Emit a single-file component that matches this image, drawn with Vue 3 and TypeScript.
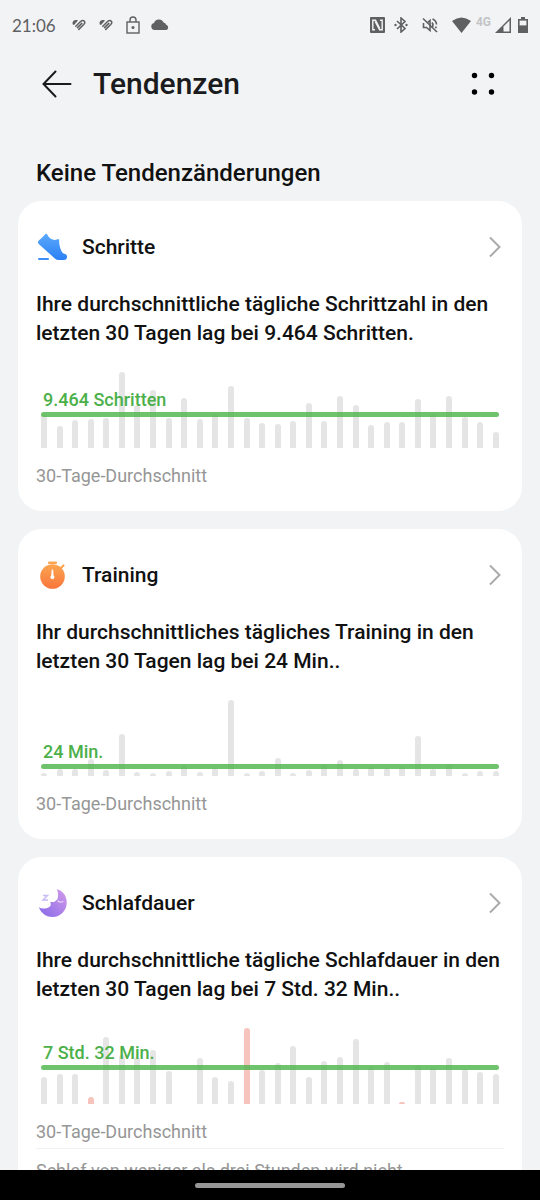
<script setup lang="ts">
interface TrendCard {
  id: 'steps' | 'training' | 'sleep'
  title: string
  lines: string[]
  average: string
  lineOffset: number
  bars: number[]
  alerts: number[]
  note?: string
}

const cards: TrendCard[] = [
  {
    id: 'steps',
    title: 'Schritte',
    lines: ['Ihre durchschnittliche tägliche Schrittzahl in den', 'letzten 30 Tagen lag bei 9.464 Schritten.'],
    average: '9.464 Schritten',
    lineOffset: 31,
    bars: [33, 22, 28, 29, 30, 76, 43, 58, 30, 50, 29, 34, 62, 30, 25, 24, 27, 45, 27, 52, 43, 23, 26, 26, 49, 34, 52, 31, 26, 16],
    alerts: [],
  },
  {
    id: 'training',
    title: 'Training',
    lines: ['Ihr durchschnittliches tägliches Training in den', 'letzten 30 Tagen lag bei 24 Min..'],
    average: '24 Min.',
    lineOffset: 7,
    bars: [3, 7, 7, 17, 6, 42, 4, 3, 5, 10, 4, 8, 76, 3, 5, 18, 3, 6, 12, 16, 7, 9, 8, 9, 40, 7, 12, 3, 5, 5],
    alerts: [],
  },
  {
    id: 'sleep',
    title: 'Schlafdauer',
    lines: ['Ihre durchschnittliche tägliche Schlafdauer in den', 'letzten 30 Tagen lag bei 7 Std. 32 Min..'],
    average: '7 Std. 32 Min.',
    lineOffset: 34,
    bars: [27, 30, 30, 7, 67, 49, 47, 54, 33, 0, 46, 27, 23, 76, 34, 41, 58, 27, 43, 47, 65, 37, 42, 2, 39, 37, 46, 35, 32, 30],
    alerts: [3, 13, 23],
    note: 'Schlaf von weniger als drei Stunden wird nicht',
  },
]
</script>

<template>
  <div class="screen">
    <div class="status">
      <div class="status-left">
        <span class="time">21:06</span>
        <svg v-for="n in 2" :key="n" class="heart" viewBox="0 0 14 12" width="14" height="12">
          <path d="M.8 5.500C-.5 2 3 .2 6 1.500L2 6z" fill="#5f6062" />
          <path d="M3.800 7.200 8.300 2.800Q10.800.600 12.300 2.200 13.500 3.600 11.700 5.500L6.800 10.400M5.500 8.600 9.800 4.400" fill="none" stroke="#5f6062" stroke-width="1.500" stroke-linecap="round" />
        </svg>
        <svg class="lock" viewBox="0 0 14 18" width="14" height="18">
          <rect x="1" y="6" width="12" height="11" fill="none" stroke="#5f6062" stroke-width="1.400" />
          <path d="M4 6V4a3 3 0 0 1 6 0v2" fill="none" stroke="#5f6062" stroke-width="1.400" />
          <circle cx="7" cy="11.500" r="1.500" fill="#5f6062" />
        </svg>
        <svg viewBox="0 0 18 12" width="18" height="12">
          <path d="M3.500 11a3.500 3.500 0 0 1-.5-6.900A5.200 5.200 0 0 1 12.600 3.500a3.500 3.500 0 0 1 2.600 2.300 2.700 2.700 0 0 1 0 5.200z" fill="#5f6062" />
        </svg>
      </div>
      <div class="status-right">
        <svg class="nfc" viewBox="0 0 15 16" width="15" height="16">
          <rect width="15" height="16" rx="1" fill="#5f6062" />
          <path d="M5 12.800H2.800V3.200H5.500L9.800 11.500M10 3.200h2.200v9.600H9.600L5.200 4.500" fill="none" stroke="#f1f3f5" stroke-width="1.400" />
        </svg>
        <svg class="bluetooth" viewBox="0 0 14 16" width="14" height="16">
          <path d="m3 4 8 7.500L7 15V1l4 3.500L3 12" fill="none" stroke="#5f6062" stroke-width="1.600" />
          <circle cx="1.500" cy="8" r="1.200" fill="#5f6062" />
          <circle cx="12.500" cy="8" r="1.200" fill="#5f6062" />
        </svg>
        <svg class="mute" viewBox="0 0 16 16" width="16" height="16">
          <path d="M1.500 6v4.500h3L8 13.500V3.500L5.500 5.500" fill="none" stroke="#5f6062" stroke-width="1.600" />
          <path d="M10 5.500q2 2.500 0 5M10.500 2q3.800 1.500 4 5.500M14.300 9.500l-.8 1.800" fill="none" stroke="#5f6062" stroke-width="1.600" />
          <path d="m1 1.500 14 13.500" stroke="#5f6062" stroke-width="1.600" />
        </svg>
        <svg class="wifi" viewBox="0 0 19 16" width="19" height="16">
          <path d="M0 4Q9.500-3.200 19 4L9.500 16z" fill="#5f6062" />
        </svg>
        <span class="network">4G</span>
        <svg class="signal" viewBox="0 0 16 16" width="16" height="16">
          <path d="M16 0V16H0z" fill="#5f6062" />
          <path d="M8.500 9.500 14.500 3.500V14.500H8.500z" fill="#f1f3f5" />
        </svg>
        <svg viewBox="0 0 10 16" width="10" height="16">
          <path d="M3 0h4v2h3v14H0V2h3z" fill="#5f6062" />
          <path d="M1.600 3.600h6.800v4.800H1.600z" fill="#f1f3f5" />
        </svg>
      </div>
    </div>

    <header class="bar">
      <button class="icon-button" type="button" aria-label="Zurück">
        <svg viewBox="0 0 30 28" width="30" height="28">
          <path d="M1.500 14H28.500M13.500 1.500 1.500 14l12 12.500" fill="none" stroke="#1b1b1d" stroke-width="2" stroke-linecap="round" />
        </svg>
      </button>
      <h1>Tendenzen</h1>
      <button class="icon-button" type="button" aria-label="Menü">
        <svg viewBox="0 0 24 24" width="24" height="24">
          <circle cx="3.500" cy="3.500" r="2.700" />
          <circle cx="20.500" cy="3.500" r="2.700" />
          <circle cx="3.500" cy="20" r="2.700" />
          <circle cx="20.500" cy="20" r="2.700" />
        </svg>
      </button>
    </header>

    <main>
      <h2>Keine Tendenzänderungen</h2>
      <section v-for="card in cards" :key="card.id" class="card">
        <button class="card-head" type="button">
          <svg v-if="card.id === 'steps'" viewBox="0 0 32 32" width="32" height="32">
            <defs>
              <linearGradient id="shoe" x1="0" y1="0" x2="0" y2="1">
                <stop offset="0" stop-color="#5ba9fb" />
                <stop offset="1" stop-color="#2b80f5" />
              </linearGradient>
            </defs>
            <path d="M9.500 2.900Q10.500 2.200 11.200 3.400q1.300 2.600 3.300 4 3.500 2.500 7 .8 1.500-.5 1.600 1 .1 7 2.800 11.700 1 1.600 3.100 2 2.500 1 2 3.500-.4 2.500-3.200 2.500h-5q-2.300 0-4-1.500L2.700 12.900q-1.500-1.700.1-3.300 3.300-3 6.700-6.700z" fill="url(#shoe)" />
            <rect x="2" y="26.900" width="11" height="2" rx="1" fill="#3d8ff6" />
          </svg>
          <svg v-else-if="card.id === 'training'" viewBox="0 0 32 32" width="32" height="32">
            <defs>
              <linearGradient id="watch" x1="0" y1="0" x2="0" y2="1">
                <stop offset="0" stop-color="#fba650" />
                <stop offset="1" stop-color="#f9753c" />
              </linearGradient>
            </defs>
            <rect x="12" y="2.500" width="9" height="2.600" rx="1.200" fill="#fba650" />
            <path d="m25 9 2.500-2.500" stroke="#fba650" stroke-width="2.200" stroke-linecap="round" />
            <circle cx="16.500" cy="17.500" r="12.300" fill="url(#watch)" />
            <path d="M15.700 10.500h1.400l.5 6a2 2 0 1 1-2.400 0z" fill="#fff" />
          </svg>
          <svg v-else viewBox="0 0 32 32" width="32" height="32">
            <defs>
              <linearGradient id="moon" x1="1" y1="0" x2="0" y2="1">
                <stop offset="0" stop-color="#d39be9" />
                <stop offset="1" stop-color="#8669e8" />
              </linearGradient>
            </defs>
            <path d="M21 2.300C27 4 30.700 9 30.700 15.500A14.200 14.200 0 0 1 16.500 30C10 30 5 26 2.800 20.300Q5 21.800 8.500 21.600 13 21 14.600 18.500 15.300 16.500 14 14.700 17 15.500 19 14.500 20 13 21.300 12.500 23 8 21 2.300z" fill="url(#moon)" />
            <path d="M7 8.500h4.500L7 13h5" fill="none" stroke="#c9bdf3" stroke-width="1.500" />
            <path d="M22 14q2 2 5 .5" fill="none" stroke="#e9d9f8" stroke-width="1.300" stroke-linecap="round" />
          </svg>
          <span class="card-title">{{ card.title }}</span>
          <svg class="chevron" viewBox="0 0 14 24" width="14" height="24">
            <path d="m2 2.500 9.500 9.500L2 21.500" fill="none" stroke="#a9aaab" stroke-width="2" />
          </svg>
        </button>
        <p class="summary">
          <span v-for="line in card.lines" :key="line">{{ line }}</span>
        </p>
        <div class="chart">
          <i
            v-for="(height, index) in card.bars"
            :key="index"
            class="column"
            :class="{ alert: card.alerts.includes(index) }"
            :style="{ height: `${height}px` }"
          />
          <div class="average" :style="{ bottom: `${card.lineOffset}px` }">
            <span>{{ card.average }}</span>
          </div>
        </div>
        <p class="caption">30-Tage-Durchschnitt</p>
        <p v-if="card.note" class="note">{{ card.note }}</p>
      </section>
    </main>

    <footer><span class="handle" /></footer>
  </div>
</template>

<style>
body {
  margin: 0;
  background: #f1f3f5;
}
</style>

<style scoped>
.screen {
  display: flex;
  flex-direction: column;
  height: 100vh;
  overflow: hidden;
  background: #f1f3f5;
  color: #111;
  font-family: Roboto, "Liberation Sans", sans-serif;
}

svg {
  display: block;
  flex: none;
}

button {
  padding: 0;
  border: 0;
  background: none;
  color: inherit;
  font: inherit;
}

h1,
h2,
p {
  margin: 0;
}

.status {
  display: flex;
  flex: none;
  align-items: center;
  justify-content: space-between;
  height: 50px;
  padding: 0 12px;
}

.status-left,
.status-right {
  display: flex;
  align-items: center;
}

.time {
  margin-right: 16px;
  color: #5f6062;
  font-family: Lato, sans-serif;
  font-size: 17px;
}

.heart {
  margin-right: 13px;
}

.lock {
  margin: 0 11px 0 0;
}

.nfc {
  margin-right: 9px;
}

.bluetooth {
  margin-right: 14px;
}

.mute {
  margin-right: 14px;
}

.wifi {
  margin-right: 5px;
}

.network {
  margin: 0 4px 6px 0;
  color: #c3c4c6;
  font-size: 12px;
  font-weight: 700;
  line-height: 12px;
}

.signal {
  margin-right: 7px;
}

.bar {
  display: flex;
  flex: none;
  align-items: center;
  height: 68px;
  padding: 0 45px 0 42px;
}

h1 {
  flex: 1;
  margin-left: 21px;
  color: #1b1b1d;
  font-size: 30px;
  font-weight: 500;
  line-height: 36px;
}

main {
  flex: 1;
  min-height: 0;
  overflow: hidden;
  padding: 0 18px;
}

h2 {
  padding: 41px 18px 14px;
  font-size: 24px;
  font-weight: 500;
  line-height: 28px;
}

.card {
  margin-bottom: 18px;
  padding: 18px 18px 23px;
  border-radius: 24px;
  background: #fff;
}

.card-head {
  display: flex;
  align-items: center;
  width: 100%;
  height: 56px;
  text-align: left;
}

.card-title {
  flex: 1;
  margin-left: 14px;
  font-size: 21px;
  font-weight: 500;
}

.chevron {
  margin-right: 2px;
}

.summary {
  margin-top: 15px;
  font-size: 21px;
  font-weight: 500;
  line-height: 29px;
}

.summary span {
  display: block;
}

.chart {
  position: relative;
  display: flex;
  align-items: flex-end;
  justify-content: space-between;
  height: 76px;
  margin: 24px 5px 0;
}

.column {
  width: 6px;
  border-radius: 3px 3px 0 0;
  background: #e5e5e5;
}

.column.alert {
  background: #f7c4bd;
}

.average {
  position: absolute;
  right: 0;
  left: 0;
  height: 5px;
  border-radius: 3px;
  background: rgba(76, 180, 72, 0.8);
}

.average span {
  position: absolute;
  bottom: 6px;
  left: 2px;
  color: #4cb04a;
  font-size: 18px;
  font-weight: 500;
  line-height: 22px;
  white-space: nowrap;
}

.caption,
.note {
  color: #969696;
  font-size: 18px;
  line-height: 24px;
}

.caption {
  margin-top: 16px;
}

.note {
  margin-top: 4px;
  padding-top: 10px;
  border-top: 1px solid #f0f0f0;
}

footer {
  display: flex;
  flex: none;
  align-items: center;
  justify-content: center;
  height: 30px;
  background: #000;
}

.handle {
  width: 150px;
  height: 5px;
  border-radius: 3px;
  background: #979797;
}
</style>
